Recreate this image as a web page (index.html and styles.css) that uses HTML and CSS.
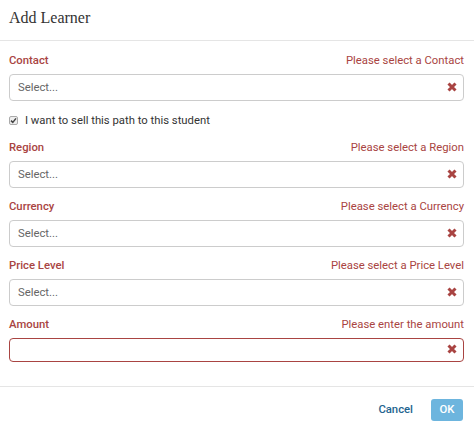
FILE: index.html
```html
<!DOCTYPE html>
<html lang="en">

<head>
    <meta charset="UTF-8">
    <meta name="viewport" content="width=device-width, initial-scale=1.0">
    <title>Add Learner</title>
    <link rel="stylesheet" href="styles.css">
</head>

<body>
    <div class="modal">
        <div class="modal-header">
            <h4 class="modal-title">Add Learner</h4>
        </div>

        <div class="modal-body">
            <div class="form-group">
                <div class="label-row">
                    <label>Contact</label>
                    <span class="help">Please select a Contact</span>
                </div>
                <div class="select-box">
                    <span class="placeholder">Select...</span>
                    <svg class="clear" width="10" height="10" viewBox="0 0 10 10"><path d="M1.5 1.5 L8.5 8.5 M8.5 1.5 L1.5 8.5" /></svg>
                </div>
            </div>

            <div class="check-row">
                <span class="checkbox">
                    <svg width="7" height="7" viewBox="0 0 7 7"><path d="M1 3.6 L2.8 5.4 L6 1.4" /></svg>
                </span>
                <span>I want to sell this path to this student</span>
            </div>

            <div class="form-group">
                <div class="label-row">
                    <label>Region</label>
                    <span class="help">Please select a Region</span>
                </div>
                <div class="select-box">
                    <span class="placeholder">Select...</span>
                    <svg class="clear" width="10" height="10" viewBox="0 0 10 10"><path d="M1.5 1.5 L8.5 8.5 M8.5 1.5 L1.5 8.5" /></svg>
                </div>
            </div>

            <div class="form-group">
                <div class="label-row">
                    <label>Currency</label>
                    <span class="help">Please select a Currency</span>
                </div>
                <div class="select-box">
                    <span class="placeholder">Select...</span>
                    <svg class="clear" width="10" height="10" viewBox="0 0 10 10"><path d="M1.5 1.5 L8.5 8.5 M8.5 1.5 L1.5 8.5" /></svg>
                </div>
            </div>

            <div class="form-group">
                <div class="label-row">
                    <label>Price Level</label>
                    <span class="help">Please select a Price Level</span>
                </div>
                <div class="select-box">
                    <span class="placeholder">Select...</span>
                    <svg class="clear" width="10" height="10" viewBox="0 0 10 10"><path d="M1.5 1.5 L8.5 8.5 M8.5 1.5 L1.5 8.5" /></svg>
                </div>
            </div>

            <div class="form-group last">
                <div class="label-row">
                    <label>Amount</label>
                    <span class="help">Please enter the amount</span>
                </div>
                <div class="text-box has-error">
                    <span class="placeholder"></span>
                    <svg class="clear" width="10" height="10" viewBox="0 0 10 10"><path d="M1.5 1.5 L8.5 8.5 M8.5 1.5 L1.5 8.5" /></svg>
                </div>
            </div>
        </div>

        <div class="modal-footer">
            <button class="btn-link">Cancel</button>
            <button class="btn-primary">OK</button>
        </div>
    </div>
</body>

</html>
```

FILE: styles.css
```css
body {
    font-family: Roboto, Arial, sans-serif;
    margin: 0;
    background-color: #fff;
    color: #333;
}

.modal {
    width: 474px;
}

.modal-header {
    height: 41px;
    padding: 0 9px;
    display: flex;
    align-items: center;
    border-bottom: 1px solid #e5e5e5;
    box-sizing: border-box;
}

.modal-title {
    margin: 0;
    margin-top: -4px;
    font-family: "Liberation Serif", serif;
    font-size: 16px;
    font-weight: normal;
    color: #333;
}

.modal-body {
    padding: 11px 10px 24px 9px;
}

.form-group {
    margin-bottom: 10px;
}

.form-group.last {
    margin-bottom: 0;
}

.label-row {
    display: flex;
    justify-content: space-between;
    align-items: center;
    height: 17px;
    margin-bottom: 5px;
    font-size: 11.3px;
    color: #a94442;
}

.label-row label {
    font-weight: 500;
}

.select-box,
.text-box {
    display: flex;
    align-items: center;
    justify-content: space-between;
    height: 27px;
    padding: 0 6px 0 8px;
    border: 1px solid #ccc;
    border-radius: 4px;
    box-sizing: border-box;
}

.text-box {
    height: 24px;
}

.has-error {
    border-color: #a94442;
}

.placeholder {
    font-size: 11.3px;
    color: #666;
}

.clear {
    margin-top: -2px;
}

.clear path {
    stroke: #a94442;
    stroke-width: 3;
    fill: none;
}

.check-row {
    display: flex;
    align-items: center;
    height: 18px;
    margin-bottom: 10px;
    font-size: 11.3px;
    color: #333;
}

.checkbox {
    display: flex;
    align-items: center;
    justify-content: center;
    width: 7px;
    height: 7px;
    margin-right: 7px;
    border: 1px solid #aaa;
    border-radius: 2px;
    background-color: #eee;
}

.checkbox path {
    stroke: #444;
    stroke-width: 1.5;
    fill: none;
}

.modal-footer {
    display: flex;
    justify-content: flex-end;
    align-items: center;
    height: 46px;
    padding: 0 11px 0 9px;
    border-top: 1px solid #e5e5e5;
    box-sizing: border-box;
}

button {
    font-family: Roboto, Arial, sans-serif;
    font-size: 11.3px;
    font-weight: 500;
    border: none;
    cursor: pointer;
}

.btn-link {
    background: none;
    color: #23648f;
    padding: 0;
    margin-right: 18px;
}

.btn-primary {
    width: 32px;
    height: 22px;
    padding: 0;
    border-radius: 3px;
    background-color: #6db5de;
    color: #fff;
}
```
